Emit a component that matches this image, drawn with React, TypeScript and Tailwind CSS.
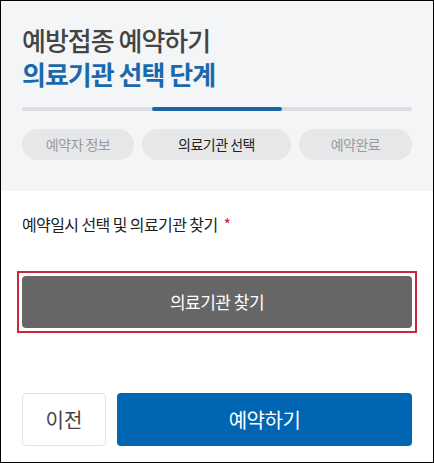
import React from "react";

const steps = [
  { label: "예약자 정보", active: false, w: "w-[112px]" },
  { label: "의료기관 선택", active: true, w: "flex-1" },
  { label: "예약완료", active: false, w: "w-[113px]" },
];

function App(): React.ReactElement {
  return (
    <div
      className="w-[434px] h-[463px] border border-black bg-white flex flex-col overflow-hidden"
      style={{ fontFamily: '"Noto Sans CJK KR", "Noto Sans", sans-serif' }}
    >
      {/* Header */}
      <div className="bg-[#f4f5f7] h-[190px] px-[21px] pt-[22px]">
        <h1 className="text-[26px] leading-[34px] font-medium text-[#444] tracking-[-1px]">
          예방접종 예약하기
        </h1>
        <h2 className="text-[26px] leading-[34px] font-bold text-[#1a69ad] tracking-[-1px]">
          의료기관 선택 단계
        </h2>

        <div className="mt-[16px] h-[4px] rounded-full bg-[#dcdde0] flex">
          <div className="w-[130px] ml-[130px] h-full rounded-full bg-[#1a65a8]" />
        </div>

        <div className="mt-[18px] flex gap-[8px]">
          {steps.map((s) => (
            <div
              key={s.label}
              className={`${s.w} h-[31px] rounded-full bg-[#e6e7e9] flex items-center justify-center text-[14px] tracking-[-0.5px] ${
                s.active ? "text-[#222]" : "text-[#9a9a9a]"
              }`}
            >
              {s.label}
            </div>
          ))}
        </div>
      </div>

      {/* Body */}
      <div className="flex-1 flex flex-col px-[21px] pt-[22px] pb-[16px]">
        <p className="text-[16px] leading-[22px] text-[#222] tracking-[-0.6px]">
          예약일시 선택 및 의료기관 찾기
          <span className="text-[#d0213a] ml-[6px]">*</span>
        </p>

        <div className="mt-[36px] -mx-[5px] border-2 border-[#c8283a] p-[3px]">
          <button className="w-full h-[52px] rounded-[4px] bg-[#666] text-white text-[17px] tracking-[-0.5px]">
            의료기관 찾기
          </button>
        </div>

        <div className="mt-auto flex gap-[11px]">
          <button className="w-[84px] h-[53px] rounded-[4px] border border-[#e2e2e2] bg-white text-[20px] text-[#444]">
            이전
          </button>
          <button className="flex-1 h-[53px] rounded-[4px] bg-[#0066b3] text-white text-[20px] tracking-[-0.5px]">
            예약하기
          </button>
        </div>
      </div>
    </div>
  );
}

export default App;
